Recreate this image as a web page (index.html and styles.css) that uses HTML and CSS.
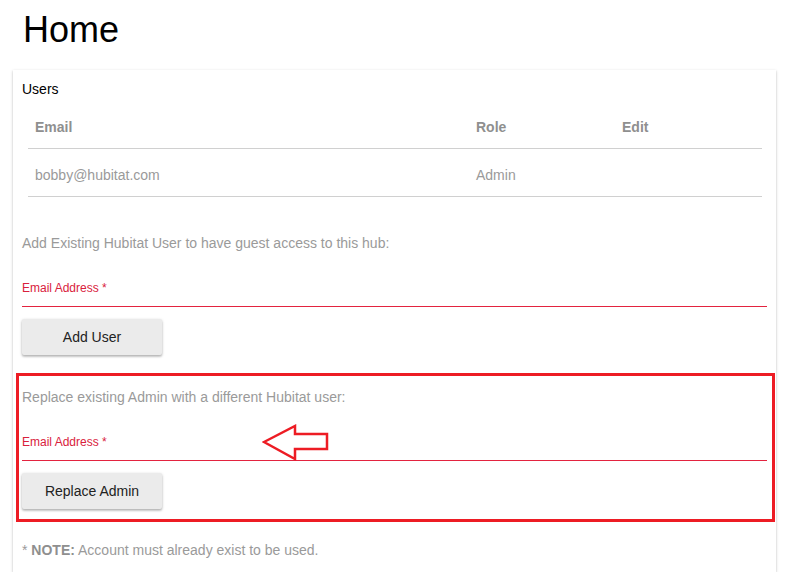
FILE: index.html
```html
<!DOCTYPE html>
<html lang="en">
<head>
    <meta charset="UTF-8">
    <meta name="viewport" content="width=device-width, initial-scale=1.0">
    <title>Home</title>
    <link rel="stylesheet" href="styles.css">
</head>
<body>
    <h1>Home</h1>

    <div class="card">
        <div class="card-title">Users</div>

        <table class="users-table">
            <colgroup>
                <col class="col-email">
                <col class="col-role">
                <col class="col-edit">
            </colgroup>
            <thead>
                <tr>
                    <th>Email</th>
                    <th>Role</th>
                    <th>Edit</th>
                </tr>
            </thead>
            <tbody>
                <tr>
                    <td>bobby@hubitat.com</td>
                    <td>Admin</td>
                    <td></td>
                </tr>
            </tbody>
        </table>

        <form class="user-form">
            <p class="hint">Add Existing Hubitat User to have guest access to this hub:</p>
            <div class="field">
                <label for="add-email">Email Address *</label>
                <input type="email" id="add-email" required>
            </div>
            <button type="button" class="btn">Add User</button>
        </form>

        <form class="user-form highlight">
            <p class="hint">Replace existing Admin with a different Hubitat user:</p>
            <div class="field">
                <label for="admin-email">Email Address *</label>
                <input type="email" id="admin-email" required>
            </div>
            <button type="button" class="btn">Replace Admin</button>

            <!-- annotation arrow pointing at the email field -->
            <svg class="arrow" width="68" height="37" viewBox="0 0 68 37">
                <polygon points="2,18 33,2 33,10 65,10 65,25 33,25 33,35" fill="none" stroke="#ed1c24" stroke-width="2.5" stroke-linejoin="miter"/>
            </svg>
        </form>

        <p class="note">* <b>NOTE:</b> Account must already exist to be used.</p>
    </div>
</body>
</html>
```

FILE: styles.css
```css
body {
    font-family: "Liberation Sans", Arial, sans-serif;
    background-color: #ffffff;
    color: #000;
    margin: 0;
    padding: 0;
}

h1 {
    font-size: 36px;
    font-weight: normal;
    line-height: 41px;
    margin: 9px 0 0 23px;
}

.card {
    background-color: #ffffff;
    margin: 20px 9px 0 13px;
    padding: 10px 9px 12px 9px;
    box-shadow: 0 1px 3px rgba(0, 0, 0, 0.2), 0 1px 1px rgba(0, 0, 0, 0.14), 0 2px 1px -1px rgba(0, 0, 0, 0.12);
}

.card-title {
    font-size: 14px;
    line-height: 18px;
}

.users-table {
    width: calc(100% - 11px);
    margin: 3px 0 0 6px;
    border-collapse: collapse;
    table-layout: fixed;
    font-size: 14px;
}

.col-email {
    width: 441px;
}

.col-role {
    width: 146px;
}

.users-table th {
    text-align: left;
    font-weight: bold;
    color: #8f8f8f;
    line-height: 16px;
    padding: 18px 7px 13px 7px;
    border-bottom: 1px solid #d0d0d0;
}

.users-table td {
    color: #9a9a9a;
    line-height: 16px;
    padding: 18px 7px 13px 7px;
    border-bottom: 1px solid #d0d0d0;
}

.user-form {
    display: flex;
    flex-direction: column;
    align-items: flex-start;
}

.hint {
    font-size: 14px;
    line-height: 20px;
    color: #9a9a9a;
    margin: 36px 0 0 0;
}

.field {
    align-self: stretch;
    margin-top: 28px;
    border-bottom: 1px solid #e3233f;
}

.field label {
    display: block;
    font-size: 12px;
    line-height: 14px;
    color: #d9213c;
}

.field input {
    display: block;
    width: 100%;
    height: 11px;
    padding: 0;
    border: none;
    outline: none;
    background: transparent;
}

.btn {
    margin-top: 12px;
    width: 140px;
    height: 36px;
    background-color: #ebebeb;
    color: #222;
    font-family: inherit;
    font-size: 14px;
    border: none;
    border-radius: 2px;
    box-shadow: 0 1px 3px rgba(0, 0, 0, 0.25), 0 2px 2px rgba(0, 0, 0, 0.12);
    cursor: pointer;
}

/* red annotation box round the admin section */
.highlight {
    position: relative;
    margin: 18px -8px 0 -6px;
    padding: 0 5px 10px 3px;
    border: 3px solid #ed1c24;
}

.highlight .hint {
    margin-top: 11px;
}

.arrow {
    position: absolute;
    left: 243px;
    top: 48px;
}

.note {
    font-size: 14px;
    line-height: 20px;
    color: #9a9a9a;
    margin: 18px 0 0 0;
}

.note b {
    color: #8f8f8f;
}
```
